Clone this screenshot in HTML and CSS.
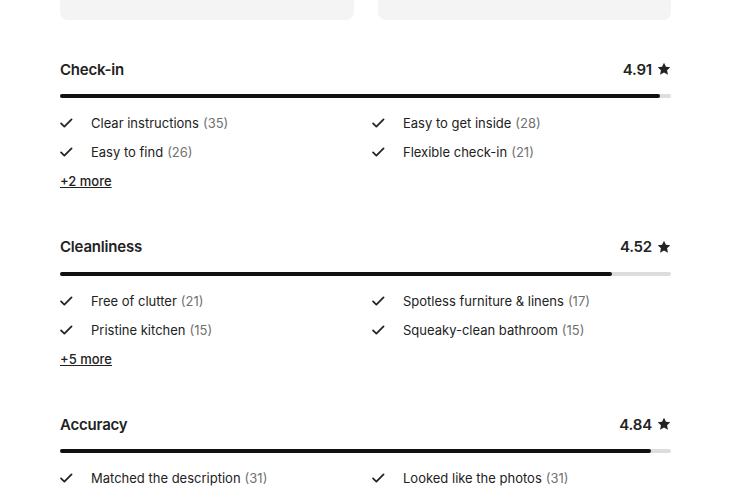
FILE: index.html
```html
<!DOCTYPE html>
<html lang="en">
<head>
    <meta charset="UTF-8">
    <meta name="viewport" content="width=device-width, initial-scale=1.0">
    <title>Ratings</title>
    <link rel="stylesheet" href="styles.css">
</head>
<body>
<main class="ratings">
    <div class="photos">
        <div class="photo"></div>
        <div class="photo"></div>
    </div>

    <section class="category">
        <header class="category-head">
            <h2>Check-in</h2>
            <span class="score">4.91 <svg class="star" viewBox="0 0 16 16"><path d="M8 .9l2.2 4.6 5 .6-3.7 3.4 1 5-4.5-2.5-4.5 2.5 1-5L.8 6.1l5-.6z"/></svg></span>
        </header>
        <div class="bar"><div class="bar-fill" style="width: 98.2%"></div></div>
        <ul class="tags">
            <li><svg class="check" viewBox="0 0 16 16"><path d="M1.2 8.5l3.8 3.7L13.2 3.8"/></svg>Clear instructions <span class="count">(35)</span></li>
            <li><svg class="check" viewBox="0 0 16 16"><path d="M1.2 8.5l3.8 3.7L13.2 3.8"/></svg>Easy to get inside <span class="count">(28)</span></li>
            <li><svg class="check" viewBox="0 0 16 16"><path d="M1.2 8.5l3.8 3.7L13.2 3.8"/></svg>Easy to find <span class="count">(26)</span></li>
            <li><svg class="check" viewBox="0 0 16 16"><path d="M1.2 8.5l3.8 3.7L13.2 3.8"/></svg>Flexible check-in <span class="count">(21)</span></li>
        </ul>
        <a class="more" href="#">+2 more</a>
    </section>

    <section class="category">
        <header class="category-head">
            <h2>Cleanliness</h2>
            <span class="score">4.52 <svg class="star" viewBox="0 0 16 16"><path d="M8 .9l2.2 4.6 5 .6-3.7 3.4 1 5-4.5-2.5-4.5 2.5 1-5L.8 6.1l5-.6z"/></svg></span>
        </header>
        <div class="bar"><div class="bar-fill" style="width: 90.4%"></div></div>
        <ul class="tags">
            <li><svg class="check" viewBox="0 0 16 16"><path d="M1.2 8.5l3.8 3.7L13.2 3.8"/></svg>Free of clutter <span class="count">(21)</span></li>
            <li><svg class="check" viewBox="0 0 16 16"><path d="M1.2 8.5l3.8 3.7L13.2 3.8"/></svg>Spotless furniture &amp; linens <span class="count">(17)</span></li>
            <li><svg class="check" viewBox="0 0 16 16"><path d="M1.2 8.5l3.8 3.7L13.2 3.8"/></svg>Pristine kitchen <span class="count">(15)</span></li>
            <li><svg class="check" viewBox="0 0 16 16"><path d="M1.2 8.5l3.8 3.7L13.2 3.8"/></svg>Squeaky-clean bathroom <span class="count">(15)</span></li>
        </ul>
        <a class="more" href="#">+5 more</a>
    </section>

    <section class="category">
        <header class="category-head">
            <h2>Accuracy</h2>
            <span class="score">4.84 <svg class="star" viewBox="0 0 16 16"><path d="M8 .9l2.2 4.6 5 .6-3.7 3.4 1 5-4.5-2.5-4.5 2.5 1-5L.8 6.1l5-.6z"/></svg></span>
        </header>
        <div class="bar"><div class="bar-fill" style="width: 96.8%"></div></div>
        <ul class="tags">
            <li><svg class="check" viewBox="0 0 16 16"><path d="M1.2 8.5l3.8 3.7L13.2 3.8"/></svg>Matched the description <span class="count">(31)</span></li>
            <li><svg class="check" viewBox="0 0 16 16"><path d="M1.2 8.5l3.8 3.7L13.2 3.8"/></svg>Looked like the photos <span class="count">(31)</span></li>
            <li><svg class="check" viewBox="0 0 16 16"><path d="M1.2 8.5l3.8 3.7L13.2 3.8"/></svg>Accurate amenities <span class="count">(24)</span></li>
            <li><svg class="check" viewBox="0 0 16 16"><path d="M1.2 8.5l3.8 3.7L13.2 3.8"/></svg>Accurate location <span class="count">(20)</span></li>
        </ul>
        <a class="more" href="#">+3 more</a>
    </section>
</main>
</body>
</html>
```

FILE: styles.css
```css
body {
    margin: 0;
    font-family: Inter, "Noto Sans", Arial, sans-serif;
    color: #222;
    background: #fff;
}

.ratings {
    width: 611px;
    margin-left: 60px;
}

.photos {
    display: grid;
    grid-template-columns: 1fr 1fr;
    gap: 24px;
    margin-bottom: 37px;
}

.photo {
    height: 20px;
    background-color: #f4f4f4;
    border-radius: 0 0 8px 8px;
}

.category {
    margin-bottom: 43.5px;
}

.category-head {
    display: flex;
    justify-content: space-between;
    align-items: center;
    height: 24px;
    margin-bottom: 13px;
}

.category-head h2 {
    margin: 0;
    font-size: 15px;
    font-weight: 600;
    letter-spacing: -0.2px;
}

.score {
    display: flex;
    align-items: center;
    gap: 5px;
    font-size: 15px;
    font-weight: 600;
    letter-spacing: -0.2px;
}

.star {
    width: 14px;
    height: 14px;
    fill: #222;
}

.bar {
    height: 4px;
    background-color: #ddd;
    border-radius: 2px;
    margin-bottom: 15px;
}

.bar-fill {
    height: 100%;
    background-color: #111;
    border-radius: 2px;
}

.tags {
    list-style: none;
    margin: 0 0 9px;
    padding: 0;
    display: grid;
    grid-template-columns: 1fr 1fr;
    column-gap: 13px;
    row-gap: 9px;
}

.tags li {
    display: flex;
    align-items: center;
    height: 20px;
    font-size: 13px;
}

.check {
    width: 14px;
    height: 14px;
    margin-right: 17px;
    fill: none;
    stroke: #222;
    stroke-width: 2;
    stroke-linecap: round;
    stroke-linejoin: round;
}

.count {
    color: #717171;
    margin-left: 4px;
}

.more {
    display: block;
    width: fit-content;
    height: 20px;
    line-height: 20px;
    font-size: 13px;
    font-weight: 500;
    color: #222;
    text-decoration: underline;
}
```
